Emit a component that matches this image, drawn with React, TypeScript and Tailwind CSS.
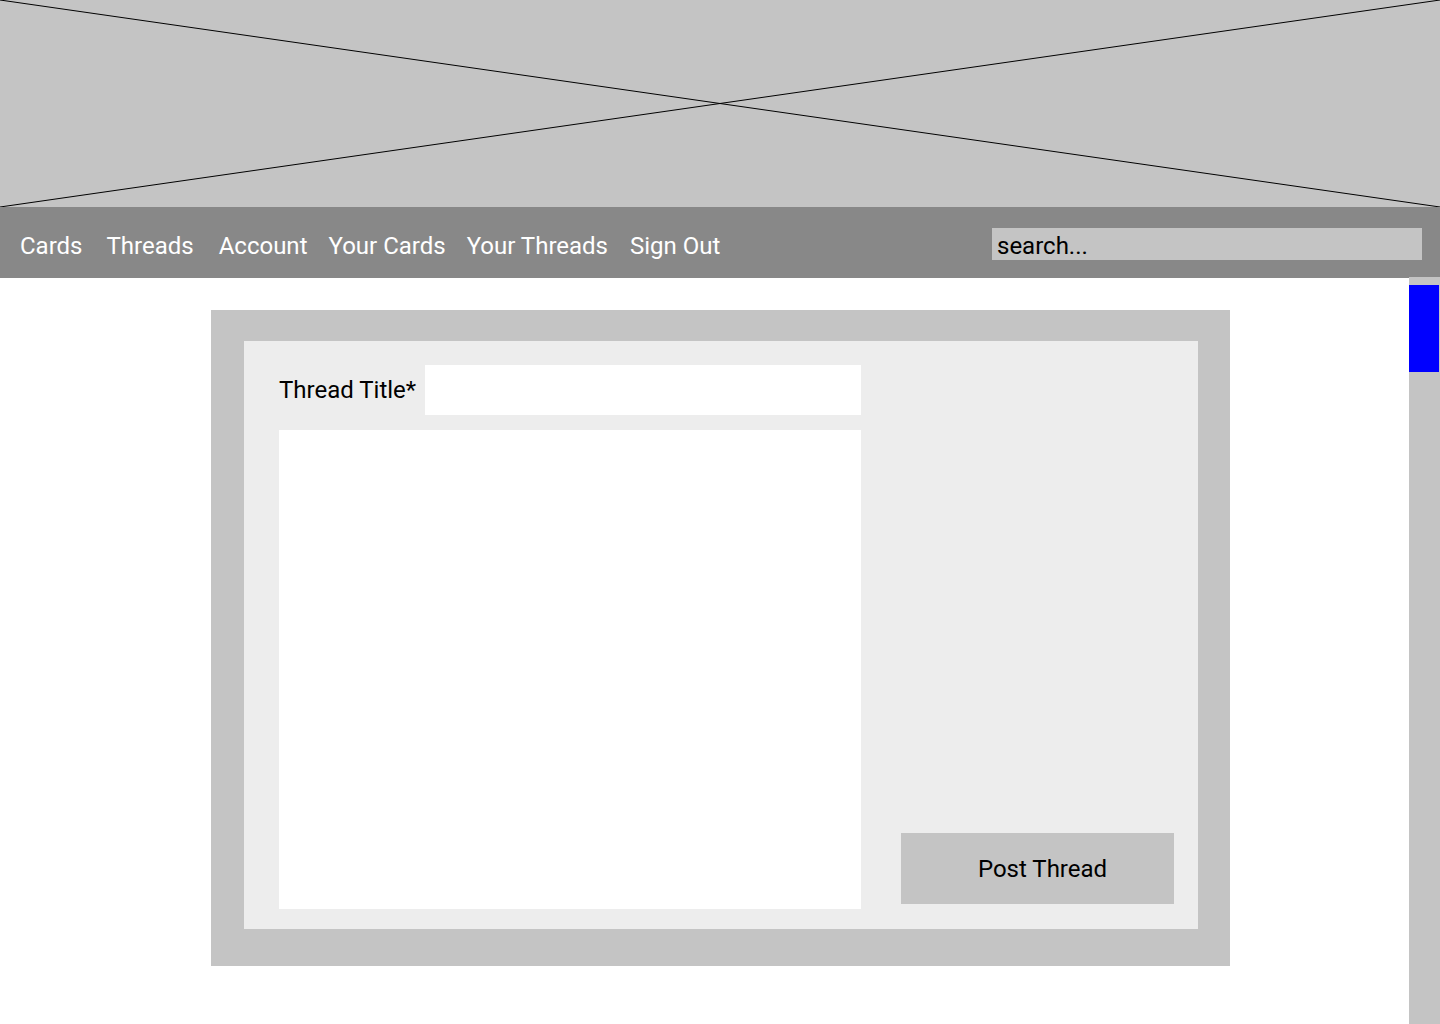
const navItems = [
  { label: 'Cards', ml: 'ml-0' },
  { label: 'Threads', ml: 'ml-[24px]' },
  { label: 'Account', ml: 'ml-[25px]' },
  { label: 'Your Cards', ml: 'ml-[21px]' },
  { label: 'Your Threads', ml: 'ml-[21px]' },
  { label: 'Sign Out', ml: 'ml-[22px]' },
]

export default function App() {
  return (
    <div className="w-[1440px] h-[1024px] bg-white overflow-hidden font-['Roboto',sans-serif]">
      {/* Banner placeholder */}
      <div className="h-[207px] bg-[#c4c4c4]">
        <svg className="w-full h-full" viewBox="0 0 1440 207" preserveAspectRatio="none">
          <line x1="0" y1="0" x2="1440" y2="207" stroke="#000" strokeWidth="1" />
          <line x1="0" y1="207" x2="1440" y2="0" stroke="#000" strokeWidth="1" />
        </svg>
      </div>

      {/* Nav */}
      <nav className="h-[71px] bg-[#888888] flex items-center pl-[20px] pr-[18px]">
        <div className="flex items-center mt-[6px] text-[24px] text-white">
          {navItems.map((item) => (
            <a key={item.label} className={`leading-none ${item.ml}`}>
              {item.label}
            </a>
          ))}
        </div>
        <div className="ml-auto mt-[2px] w-[430px] h-[32px] bg-[#c4c4c4] flex items-center pl-[5px] pt-[4px] text-[24px] text-black">
          search...
        </div>
      </nav>

      <div className="flex h-[746px]">
        <main className="flex-1 pt-[32px] pl-[211px]">
          <div className="w-[1019px] bg-[#c4c4c4] pt-[31px] pl-[33px] pb-[37px]">
            <div className="w-[954px] h-[588px] bg-[#ededed] flex pl-[35px] pt-[24px] pb-[20px]">
              <div className="w-[582px] flex flex-col gap-[15px]">
                <div className="flex items-center">
                  <label className="w-[146px] text-[24px] text-black">Thread Title*</label>
                  <div className="w-[436px] h-[50px] bg-white" />
                </div>
                <div className="flex-1 bg-white" />
              </div>
              <div className="flex-1 flex flex-col justify-end pl-[40px] pb-[5px]">
                <button className="w-[273px] h-[71px] bg-[#c4c4c4] pl-[10px] text-[24px] text-black">
                  Post Thread
                </button>
              </div>
            </div>
          </div>
        </main>

        {/* Scrollbar */}
        <div className="w-[31px] bg-[#c4c4c4] -mt-[1px] pt-[8px]">
          <div className="w-[30px] h-[87px] bg-[#0000ff]" />
        </div>
      </div>
    </div>
  )
}
